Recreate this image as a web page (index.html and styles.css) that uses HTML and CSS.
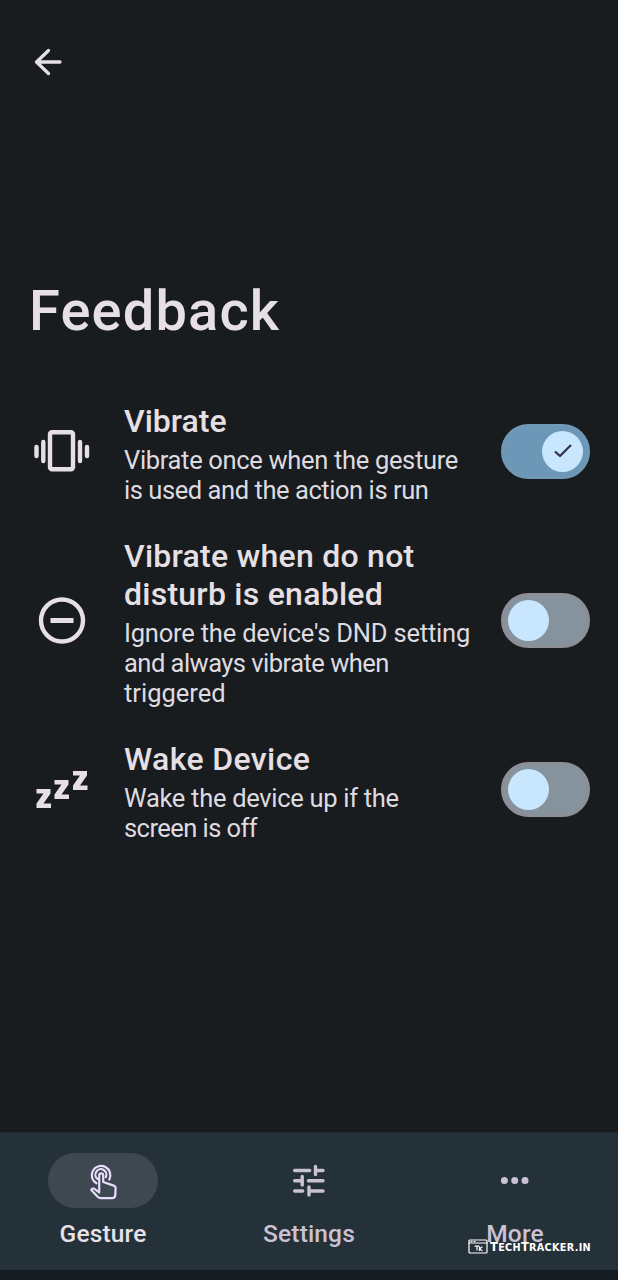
FILE: index.html
```html
<!DOCTYPE html>
<html lang="en">
<head>
<meta charset="utf-8">
<title>Feedback</title>
<link rel="stylesheet" href="styles.css">
</head>
<body>
<div class="screen">
  <header class="top-bar">
    <svg class="back" viewBox="0 0 28 28"><path d="M14.5 2.5 2.5 14l12 11.500M3 14h23"/></svg>
  </header>
  <h1 class="page-title">Feedback</h1>
  <main class="list">
    <section class="row">
      <svg class="row-icon" viewBox="0 0 56 56"><rect x="16" y="9.300" width="23" height="37" rx="2"/><path d="M2.500 24v9M9.300 19v19M46 19v19M53 24v9"/></svg>
      <div class="row-text">
        <h2 class="row-title">Vibrate</h2>
        <p class="row-desc"><span class="l1">Vibrate once when the gesture</span><br><span class="l2">is used and the action is run</span></p>
      </div>
      <div class="switch on"><div class="thumb"><svg class="check" viewBox="0 0 20 16"><path d="m2 8.500 5 4.500L18 2"/></svg></div></div>
    </section>
    <section class="row">
      <svg class="row-icon" viewBox="0 0 56 56"><circle cx="28" cy="27.500" r="21"/><path class="butt" d="M16.500 27.500h23"/></svg>
      <div class="row-text">
        <h2 class="row-title"><span class="t2">Vibrate when do not</span><br><span class="t2">disturb is enabled</span></h2>
        <p class="row-desc"><span class="l3">Ignore the device's DND setting</span><br><span class="l4">and always vibrate when</span><br><span class="l5">triggered</span></p>
      </div>
      <div class="switch"><div class="thumb"></div></div>
    </section>
    <section class="row">
      <svg class="row-icon" viewBox="0 0 56 56"><path class="zzz" d="M2.500 27h14v4.500L9.500 41.500h7.500v4.500H2.500v-4.500L9.500 31.500h-7zM20.500 18h14v4.500L27.500 32.500h7.500V37H20.500v-4.500L27.500 22.500h-7zM39 9h14v4.500L46 23.500h7.500V28H39v-4.500l7-10H39z"/></svg>
      <div class="row-text">
        <h2 class="row-title"><span class="t4">Wake Device</span></h2>
        <p class="row-desc"><span class="l6">Wake the device up if the</span><br><span class="l7">screen is off</span></p>
      </div>
      <div class="switch"><div class="thumb"></div></div>
    </section>
  </main>
  <nav class="nav">
    <div class="nav-item active">
      <div class="pill"><svg class="nav-icon" viewBox="0 0 36 40"><path d="M11.500 22.300a9.300 9.300 0 1 1 12.800-3.800M12.500 18a5.500 5.500 0 1 1 8.300-1.800M14.200 31.500V14.300a2 2 0 0 1 4 0V21l10.500 3.600q2 .8 1.900 3l-.3 6.500q-.2 3-3.200 3H15.500q-1.500 0-2.800-1.300L6.300 29q.9-2.200 3.200-1.200z"/></svg></div>
      <span class="nav-label">Gesture</span>
    </div>
    <div class="nav-item">
      <div class="pill"><svg class="nav-icon" viewBox="0 0 36 40"><path class="tune" d="M3.700 9.500h15M24.500 9.500h7.500M24.500 5.500v8M3.700 19.700h7.500M11.200 15.500v8.500M17.500 19.700H32M3.700 30h8M18 30h14M18 26v8"/></svg></div>
      <span class="nav-label">Settings</span>
    </div>
    <div class="nav-item">
      <div class="pill"><svg class="nav-icon" viewBox="0 0 36 40"><path class="dots" d="M7.400 19.600h.01M17.700 19.600h.01M28 19.600h.01"/></svg></div>
      <span class="nav-label">More</span>
    </div>
  </nav>
  <div class="watermark">
    <svg class="mark" viewBox="0 0 20 15"><rect x="1" y="1" width="18" height="13" rx="1"/><path d="M1 4h18M3 2.500h1M6 2.500h1M7 7.200h4M9 7v4M11.500 8v3.500M14 8l-2.500 2 2.500 1.500"/></svg>
    <span class="brand">T<small>ECH</small>T<small>RACKER.IN</small></span>
  </div>
</div>
</body>
</html>
```
FILE: styles.css
```css
* { box-sizing: border-box; }
body { margin: 0; background: #191c1f; }
.screen {
  position: relative;
  display: flex;
  flex-direction: column;
  width: 618px;
  height: 1280px;
  overflow: hidden;
  background: #191c1f;
  color: #e6e0e5;
  font-family: Roboto, "Noto Sans", sans-serif;
}
svg { display: block; fill: none; stroke: currentColor; stroke-linecap: round; stroke-linejoin: round; }
h1, h2, p { margin: 0; }
.top-bar { height: 273px; padding: 48px 0 0 34px; }
.back { width: 28px; height: 28px; stroke-width: 3.300; }
.page-title { height: 128px; padding-left: 29px; font-size: 56px; font-weight: 500; line-height: 76px; letter-spacing: 1.150px; white-space: nowrap; }
.list { display: flex; flex-direction: column; gap: 34.500px; flex: 1; }
.row { display: flex; align-items: center; padding: 0 28px 0 34px; }
.row-icon { width: 56px; height: 56px; margin-right: 34px; stroke-width: 4.400; }
.butt { stroke-linecap: butt; stroke-width: 5; }
.zzz { fill: currentColor; stroke: none; }
.row-text { flex: 1; padding-top: 0.500px; white-space: nowrap; }
.row-title { font-size: 32px; font-weight: 500; line-height: 38.500px; }
.t2 { letter-spacing: 0.250px; }
.t4 { letter-spacing: 0.380px; }
.row-desc { margin: 4.500px 0 -3px; font-size: 25.500px; line-height: 30px; color: #dedbe0; }
.l1 { letter-spacing: -0.330px; }
.l2 { letter-spacing: -0.440px; }
.l3 { letter-spacing: -0.200px; }
.l4 { letter-spacing: -0.530px; }
.l6 { letter-spacing: -0.300px; }
.l7 { letter-spacing: -0.550px; }
.switch { width: 89px; height: 55px; padding: 5px; border: 2px solid #918d94; border-radius: 28px; background: #86929c; }
.switch.on { display: flex; justify-content: flex-end; border-color: #7198b5; background: #6d97b6; }
.thumb { display: flex; align-items: center; justify-content: center; width: 41px; height: 41px; border-radius: 50%; background: #c9e6ff; color: #35334a; }
.check { width: 20px; height: 16px; stroke-width: 2.300; stroke-linecap: butt; stroke-linejoin: miter; }
.nav { display: flex; height: 148px; padding-top: 20px; background: #253139; border-top: 1px solid #202a31; border-bottom: 10px solid #151c21; color: #cac2d4; }
.nav-item { display: flex; flex: 1; flex-direction: column; align-items: center; }
.pill { display: flex; align-items: center; justify-content: center; width: 110px; height: 55px; border-radius: 28px; }
.active .pill { background: #3e4851; color: #e8ddfb; }
.active .nav-label { color: #e7e1e8; }
.nav-icon { width: 36px; height: 40px; stroke-width: 2.200; }
.tune { stroke-width: 3.400; }
.dots { stroke-width: 7; }
.nav-label { margin-top: 11px; font-size: 24.500px; font-weight: 500; line-height: 30px; letter-spacing: 0.150px; }
.watermark { position: absolute; left: 468px; top: 1238px; display: flex; align-items: center; gap: 2px; height: 16px; color: #fff; }
.mark { width: 20px; height: 15px; stroke-width: 1.200; }
.brand { padding-top: 2px; font: 700 11.500px/16px "DejaVu Sans", sans-serif; letter-spacing: 0.300px; white-space: nowrap; }
.brand small { font-size: 9.700px; }
```
